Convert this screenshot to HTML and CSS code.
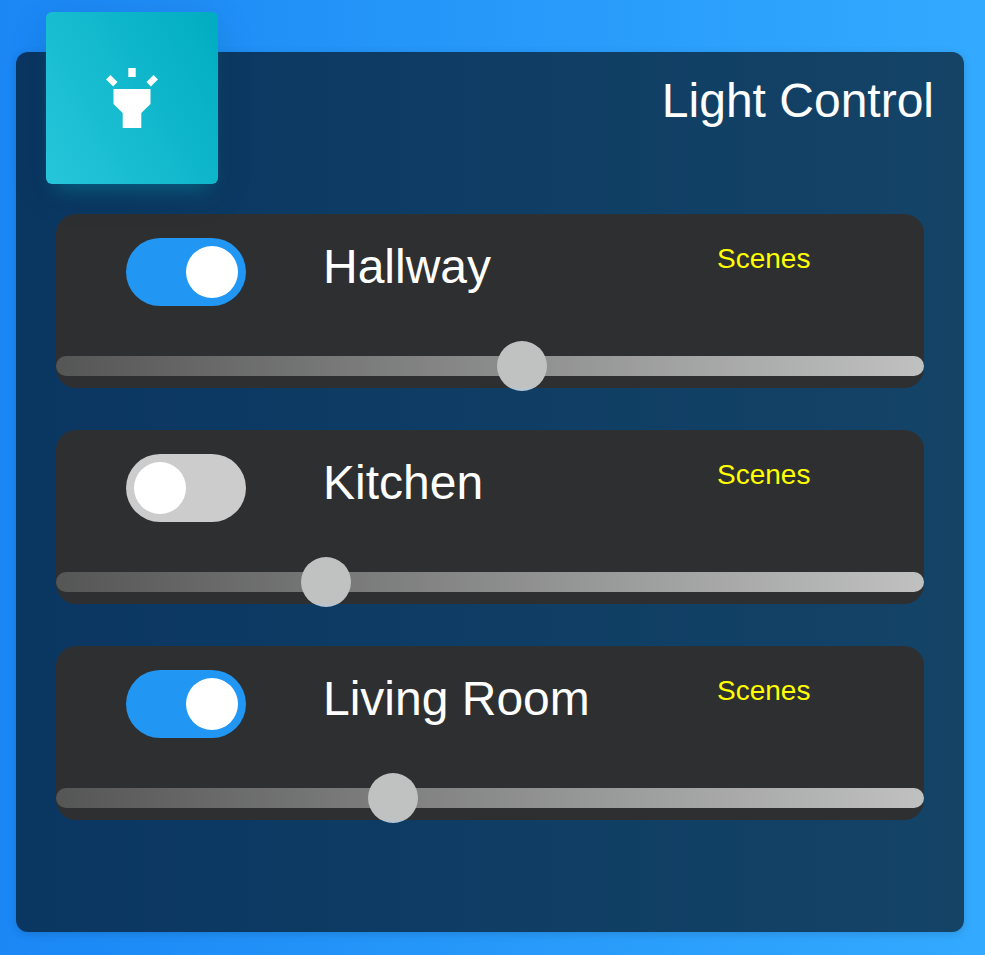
FILE: index.html
```html
<!DOCTYPE html>
<html lang="en">
<head>
<meta charset="utf-8">
<title>Light Control</title>
<link rel="stylesheet" href="styles.css">
</head>
<body>
<main class="card">
  <header class="card-header">
    <div class="card-icon">
      <svg width="72" height="72" viewBox="0 0 72 72" fill="#fff" aria-hidden="true">
        <path d="M32.3 6h7.4v9h-7.4z"/>
        <path d="M14.4 13.1L21.5 19.9L17.2 24.4L10.1 17.6z"/>
        <path d="M57.6 13.1L50.5 19.9L54.8 24.4L61.9 17.6z"/>
        <path d="M17.5 27h37v15l-9.2 9v15h-18.6V51l-9.2-9z"/>
      </svg>
    </div>
    <h1 class="card-title">Light Control</h1>
  </header>
  <section class="room">
    <div class="room-row">
      <div class="switch on"><span class="knob"></span></div>
      <h2 class="room-name">Hallway</h2>
      <a class="scenes">Scenes</a>
    </div>
    <div class="slider"><span class="thumb" style="margin-left:441px"></span></div>
  </section>
  <section class="room">
    <div class="room-row">
      <div class="switch"><span class="knob"></span></div>
      <h2 class="room-name">Kitchen</h2>
      <a class="scenes">Scenes</a>
    </div>
    <div class="slider"><span class="thumb" style="margin-left:245px"></span></div>
  </section>
  <section class="room">
    <div class="room-row">
      <div class="switch on"><span class="knob"></span></div>
      <h2 class="room-name">Living Room</h2>
      <a class="scenes">Scenes</a>
    </div>
    <div class="slider"><span class="thumb" style="margin-left:312px"></span></div>
  </section>
</main>
</body>
</html>
```
FILE: styles.css
```css
* {
  box-sizing: border-box;
}

html {
  height: 100%;
}

body {
  margin: 0;
  height: 100%;
  padding: 52px 21px 23px 16px;
  overflow: hidden;
  background: linear-gradient(90deg, #1a87f5, #33aaff);
  font-family: "Liberation Sans", Arial, sans-serif;
  color: #fff;
}

.card {
  height: 880px;
  border-radius: 12px;
  background: rgba(0, 0, 0, 0.6);
  box-shadow: 0 2px 8px rgba(0, 0, 0, 0.14);
}

.card-header {
  display: flex;
  justify-content: space-between;
  align-items: flex-start;
  height: 162px;
  padding: 0 30px;
}

.card-icon {
  display: flex;
  align-items: center;
  justify-content: center;
  width: 172px;
  height: 172px;
  margin-top: -40px;
  border-radius: 6px;
  background: linear-gradient(60deg, #26c6da, #00acc1);
  box-shadow: 0 8px 40px rgba(0, 0, 0, 0.1), 0 14px 20px -10px rgba(0, 188, 212, 0.4);
}

.card-title {
  margin: 21px 0 0;
  font-size: 48px;
  line-height: 56px;
  font-weight: 400;
}

.room {
  height: 173.5px;
  margin: 0 40px 42.5px;
  border-radius: 20px;
  background: #2e2f31;
}

.room-row {
  display: grid;
  grid-template-columns: 197px 394px 1fr;
  height: 142px;
  padding: 24px 0 0 70px;
  align-items: start;
}

.switch {
  display: flex;
  width: 120px;
  height: 68px;
  padding: 8px;
  border-radius: 34px;
  background: #ccc;
}

.switch.on {
  justify-content: flex-end;
  background: #2196f3;
}

.knob {
  width: 52px;
  height: 52px;
  border-radius: 50%;
  background: #fff;
}

.room-name {
  margin: 1px 0 0;
  font-size: 48px;
  line-height: 56px;
  font-weight: 400;
}

.scenes {
  margin-top: 1px;
  font-size: 28px;
  line-height: 40px;
  color: #ff0;
}

.slider {
  display: flex;
  align-items: center;
  height: 20px;
  border-radius: 10px;
  background: linear-gradient(90deg, #666, #fff);
  opacity: 0.7;
}

.thumb {
  flex: none;
  width: 50px;
  height: 50px;
  border-radius: 50%;
  background: #fff;
}
```
